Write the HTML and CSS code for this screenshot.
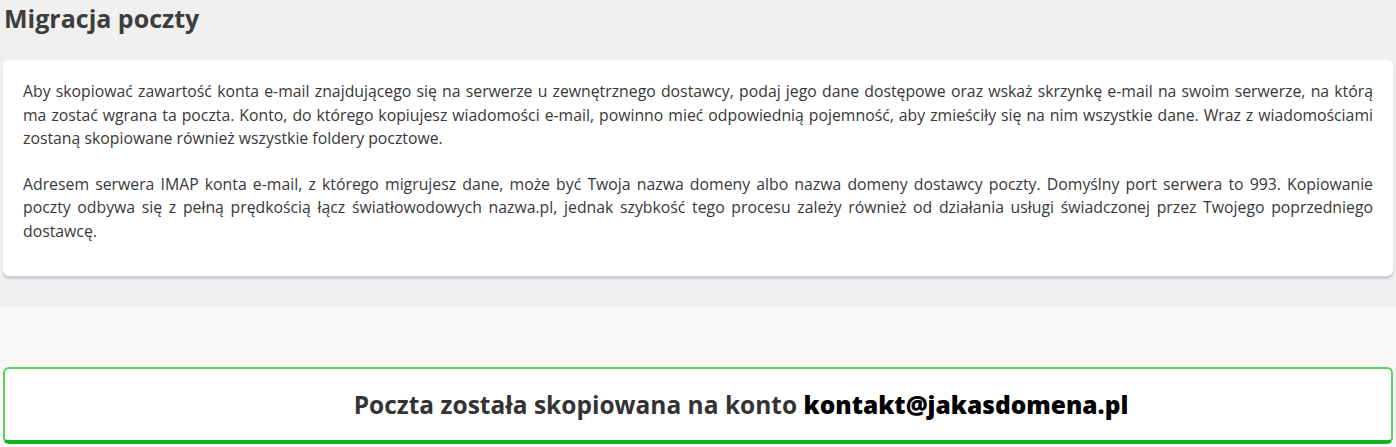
FILE: index.html
```html
<!doctype html>
<html lang="pl">
    <head>
        <meta charset="utf-8">
        <meta name="viewport" content="width=device-width, initial-scale=1.0">
        <title>Migracja poczty</title>
        <link rel="stylesheet" href="styles.css">
    </head>
    <body>
        <section class="intro">
            <h1>Migracja poczty</h1>
            <div class="card">
                <p>Aby skopiować zawartość konta e-mail znajdującego się na serwerze u zewnętrznego dostawcy, podaj jego dane dostępowe oraz wskaż skrzynkę e-mail na swoim serwerze, na którą ma zostać wgrana ta poczta. Konto, do którego kopiujesz wiadomości e-mail, powinno mieć odpowiednią pojemność, aby zmieściły się na nim wszystkie dane. Wraz z wiadomościami zostaną skopiowane również wszystkie foldery pocztowe.</p>
                <p>Adresem serwera IMAP konta e-mail, z którego migrujesz dane, może być Twoja nazwa domeny albo nazwa domeny dostawcy poczty. Domyślny port serwera to 993. Kopiowanie poczty odbywa się z pełną prędkością łącz światłowodowych nazwa.pl, jednak szybkość tego procesu zależy również od działania usługi świadczonej przez Twojego poprzedniego dostawcę.</p>
            </div>
        </section>
        <main class="result">
            <div class="success">
                <p>Poczta została skopiowana na konto <strong>kontakt@jakasdomena.pl</strong></p>
            </div>
        </main>
    </body>
</html>
```

FILE: styles.css
```css
* {
    padding: 0;
    margin: 0;
    box-sizing: border-box;
    font-family: 'Open Sans', 'Noto Sans', sans-serif;
}

body {
    background: #f8f8f8;
    color: #3a3a3a;
}

.intro {
    background: #f0f0f0;
    padding: 0 3px 31px;
}

h1 {
    font-size: 25px;
    line-height: 36px;
    font-weight: 700;
    color: #3d3d3d;
    padding-left: 1px;
    margin-bottom: 24px;
}

.card {
    background: #fff;
    border-radius: 6px;
    padding: 20px 20px 33px;
    box-shadow: 0 3px 2px rgba(110, 130, 150, 0.3);
}

.card p {
    font-size: 15.8px;
    line-height: 23.5px;
    text-align: justify;
    color: #383838;
}

.card p:not(:last-child) {
    margin-bottom: 22px;
}

.result {
    padding: 60px 3px 3px;
}

.success {
    background: #fff;
    border: 2px solid #5cd163;
    border-bottom: 4px solid #10b421;
    border-radius: 6px;
    height: 77px;
    padding-left: 86px;
    display: flex;
    align-items: center;
    justify-content: center;
}

.success p {
    font-size: 24.5px;
    font-weight: 700;
    color: #333;
}

.success strong {
    color: #000;
}
```
